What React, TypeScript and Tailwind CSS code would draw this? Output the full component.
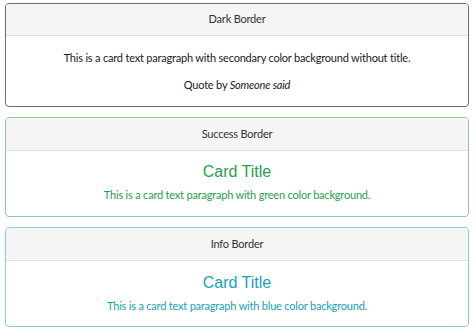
export default function App() {
  return (
    <div className="w-[474px] h-[331px] bg-white pt-[3px] px-[5px] flex flex-col gap-[10px] font-['Lato','Open_Sans',sans-serif]">
      <div className="border border-[#6b6b6b] rounded-[4px] overflow-hidden h-[104px] flex flex-col">
        <div className="h-[32px] bg-[#f5f5f5] border-b border-[#e2e2e2] flex items-center justify-center text-[11px] tracking-[-0.2px] text-[#333]">
          Dark Border
        </div>
        <div className="flex-1 flex flex-col items-center pt-[13px] gap-[9px] text-[11px] leading-[18px] tracking-[-0.2px] text-[#1a1a1a]">
          <p>This is a card text paragraph with secondary color background without title.</p>
          <p>
            Quote by <em>Someone said</em>
          </p>
        </div>
      </div>

      <div className="border border-[#8fcb9e] rounded-[4px] overflow-hidden h-[100px] flex flex-col">
        <div className="h-[33px] bg-[#f5f5f5] border-b border-[#e2e2e2] flex items-center justify-center text-[11px] tracking-[-0.2px] text-[#333]">
          Success Border
        </div>
        <div className="flex-1 flex flex-col items-center pt-[11px] gap-[4px] text-[#2a9e4b]">
          <h2 className="font-['Liberation_Sans',Arial,sans-serif] text-[16px] leading-[20px]">Card Title</h2>
          <p className="text-[11px] leading-[18px] tracking-[-0.2px]">This is a card text paragraph with green color background.</p>
        </div>
      </div>

      <div className="border border-[#86cdd8] rounded-[4px] overflow-hidden h-[100px] flex flex-col">
        <div className="h-[33px] bg-[#f5f5f5] border-b border-[#e2e2e2] flex items-center justify-center text-[11px] tracking-[-0.2px] text-[#333]">
          Info Border
        </div>
        <div className="flex-1 flex flex-col items-center pt-[12px] gap-[4px] text-[#17a2b8]">
          <h2 className="font-['Liberation_Sans',Arial,sans-serif] text-[16px] leading-[20px]">Card Title</h2>
          <p className="text-[11px] leading-[18px] tracking-[-0.2px]">This is a card text paragraph with blue color background.</p>
        </div>
      </div>
    </div>
  );
}
